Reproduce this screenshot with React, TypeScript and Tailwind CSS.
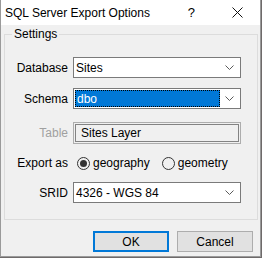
const font = { fontFamily: '"Liberation Sans", Arial, sans-serif' }

function Chevron() {
  return (
    <svg width="9" height="5" viewBox="0 0 9 5" className="mr-[6px]">
      <path d="M0.5 0.5 L4.5 4.5 L8.5 0.5" fill="none" stroke="#5a5a5a" strokeWidth="1" />
    </svg>
  )
}

function Combo({ value, focused }: { value: string; focused?: boolean }) {
  return (
    <div className="flex h-[21px] w-[168px] items-center border border-[#7a7a7a] bg-white">
      {focused ? (
        <div className="ml-[1px] flex h-[17px] w-[145px] items-center border border-dotted border-[#000] bg-[#0078d7] pl-[1px] text-white">
          {value}
        </div>
      ) : (
        <div className="flex-1 pl-[2px]">{value}</div>
      )}
      <div className="ml-auto flex">
        <Chevron />
      </div>
    </div>
  )
}

function Row({
  label,
  dim,
  children,
  className,
}: {
  label: string
  dim?: boolean
  children: React.ReactNode
  className?: string
}) {
  return (
    <div className={`flex items-center ${className ?? ''}`}>
      <div className={`w-[64px] pr-[1px] text-right ${dim ? 'text-[#a0a0a0]' : 'text-black'}`}>{label}</div>
      <div className="ml-[4px]">{children}</div>
    </div>
  )
}

function Radio({ checked, label }: { checked?: boolean; label: string }) {
  return (
    <label className="flex items-center">
      <span className="flex h-[13px] w-[13px] items-center justify-center rounded-full border border-[#333]">
        {checked && <span className="h-[7px] w-[7px] rounded-full bg-[#333]" />}
      </span>
      <span className="ml-[3px]">{label}</span>
    </label>
  )
}

export default function App() {
  return (
    <div className="h-[258px] w-[262px] bg-[#6e6a6a] text-[12px] leading-[16px] text-black" style={font}>
      <div className="flex h-[257px] w-[261px] flex-col border-x border-b border-[#9a9a9a] bg-[#f0f0f0]">
        {/* title bar */}
        <div className="flex h-[25px] items-center bg-white pl-[4px]">
          <span className="text-[12px]">SQL Server Export Options</span>
          <span className="ml-auto mr-[37px] text-[13px]">?</span>
          <svg width="11" height="11" viewBox="0 0 11 11" className="mr-[17px]">
            <path d="M0.5 0.5 L10.5 10.5 M10.5 0.5 L0.5 10.5" stroke="#111" strokeWidth="1" />
          </svg>
        </div>

        {/* settings group */}
        <fieldset className="ml-[3px] mr-[2px] mt-[1px] border border-[#dcdcdc] pb-[16px]">
          <legend className="ml-[7px] px-[2px]">Settings</legend>
          <Row label="Database" className="mt-[15px]">
            <Combo value="Sites" />
          </Row>
          <Row label="Schema" className="mt-[10px]">
            <Combo value="dbo" focused />
          </Row>
          <Row label="Table" dim className="mt-[13px]">
            <div className="h-[22px] w-[168px] border border-[#adadad] p-[1px]">
              <div className="flex h-full items-center border border-[#838383] pl-[5px]">Sites Layer</div>
            </div>
          </Row>
          <Row label="Export as" className="mt-[11px]">
            <div className="flex items-center gap-[12px] pl-[4px]">
              <Radio checked label="geography" />
              <Radio label="geometry" />
            </div>
          </Row>
          <Row label="SRID" className="mt-[11px]">
            <Combo value="4326 - WGS 84" />
          </Row>
        </fieldset>

        {/* buttons */}
        <div className="mt-[11px] flex gap-[8px] pl-[92px]">
          <button className="h-[21px] w-[76px] border-2 border-[#0078d7] bg-[#e1e1e1]">OK</button>
          <button className="h-[21px] w-[76px] border border-[#adadad] bg-[#e1e1e1]">Cancel</button>
        </div>
      </div>
    </div>
  )
}
